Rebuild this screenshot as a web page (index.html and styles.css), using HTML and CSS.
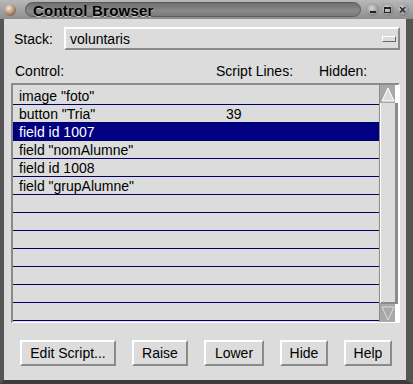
FILE: index.html
```html
<!DOCTYPE html>
<html lang="en">
<head>
    <meta charset="UTF-8">
    <title>Control Browser</title>
    <link rel="stylesheet" href="styles.css">
</head>
<body>
    <div class="window">
        <!-- Title bar -->
        <div class="titlebar">
            <span class="orb"></span>
            <div class="title-pill"><span class="title-text">Control Browser</span></div>
            <div class="win-btns">
                <span class="win-btn"><span class="glyph-min"></span></span>
                <span class="win-btn"><span class="glyph-max"></span></span>
                <span class="win-btn"><span class="glyph-close">&times;</span></span>
            </div>
        </div>

        <div class="content">
            <div class="stack-row">
                <span class="stack-label">Stack:</span>
                <div class="dropdown">
                    <span>voluntaris</span>
                    <span class="drop-ind"></span>
                </div>
            </div>

            <div class="headers">
                <span class="col-control">Control:</span>
                <span class="col-lines">Script Lines:</span>
                <span class="col-hidden">Hidden:</span>
            </div>

            <div class="listbox">
                <div class="rows">
                    <div class="row"><span class="c1">image "foto"</span></div>
                    <div class="row"><span class="c1">button "Tria"</span><span class="c2">39</span></div>
                    <div class="row selected"><span class="c1">field id 1007</span></div>
                    <div class="row"><span class="c1">field "nomAlumne"</span></div>
                    <div class="row"><span class="c1">field id 1008</span></div>
                    <div class="row"><span class="c1">field "grupAlumne"</span></div>
                    <div class="row"></div>
                    <div class="row"></div>
                    <div class="row"></div>
                    <div class="row"></div>
                    <div class="row"></div>
                    <div class="row"></div>
                    <div class="row"></div>
                </div>
                <div class="scrollbar">
                    <div class="arrow">
                        <svg width="14" height="15" viewBox="0 0 14 15"><path d="M7 1 L13 14 L1 14 Z" fill="#dcdcdc" stroke="#ffffff" stroke-width="1"/></svg>
                    </div>
                    <div class="thumb"></div>
                    <div class="arrow">
                        <svg width="14" height="15" viewBox="0 0 14 15"><path d="M1 1 L13 1 L7 14 Z" fill="#a8a8a8" stroke="#dcdcdc" stroke-width="1"/></svg>
                    </div>
                </div>
            </div>

            <div class="buttons">
                <button class="btn btn-edit">Edit Script...</button>
                <button class="btn btn-raise">Raise</button>
                <button class="btn btn-lower">Lower</button>
                <button class="btn btn-hide">Hide</button>
                <button class="btn btn-help">Help</button>
            </div>
        </div>
    </div>
</body>
</html>
```

FILE: styles.css
```css
* {
    margin: 0;
    padding: 0;
    box-sizing: border-box;
}

body {
    width: 413px;
    height: 384px;
    overflow: hidden;
    background: #4a4a4a;
    font-family: 'Liberation Sans', Arial, sans-serif;
    font-size: 14px;
    color: #000;
}

/* Outer frame */
.window {
    width: 413px;
    height: 384px;
    display: flex;
    flex-direction: column;
    background: #a4a4a4;
    border-left: 4px solid #555;
    border-right: 7px solid #555;
    border-bottom: 4px solid #3c3c3c;
}

/* Title bar */
.titlebar {
    height: 19px;
    display: flex;
    align-items: center;
    background: linear-gradient(#b8b8b8, #8e8e8e);
    margin: 0 -7px 0 -4px;
    padding: 0 4px 0 4px;
}

.orb {
    width: 12px;
    height: 12px;
    border-radius: 50%;
    background: radial-gradient(circle at 40% 35%, #f4e8d8 0, #b89a80 45%, #4a3a30 100%);
    flex-shrink: 0;
}

.title-pill {
    margin-left: 9px;
    width: 338px;
    height: 15px;
    border-radius: 8px;
    background: linear-gradient(#6e6e6e, #8a8a8a 60%, #7a7a7a);
    border: 1px solid #5a5a5a;
    display: flex;
    align-items: center;
    padding-left: 7px;
}

.title-text {
    font-weight: bold;
    font-size: 15px;
    letter-spacing: 0.2px;
    line-height: 15px;
    margin-top: 2px;
    text-shadow: 0 1px 0 #c8c8c8;
}

.win-btns {
    display: flex;
    gap: 2px;
    margin-left: 5px;
}

.win-btn {
    width: 13px;
    height: 13px;
    border-radius: 50%;
    background: radial-gradient(circle at 45% 40%, #d8d8d8 0, #9a9a9a 55%, #5a5a5a 100%);
    display: flex;
    align-items: center;
    justify-content: center;
}

.glyph-min {
    width: 6px;
    height: 2px;
    background: #222;
    margin-top: 5px;
}

.glyph-max {
    width: 7px;
    height: 6px;
    border: 1px solid #222;
    border-top-width: 2px;
}

.glyph-close {
    font-size: 12px;
    font-weight: bold;
    line-height: 12px;
    color: #222;
}

/* Dialog body */
.content {
    flex: 1;
    background: #dcdcdc;
    padding: 8px 6px 0 7px;
    display: flex;
    flex-direction: column;
}

.stack-row {
    display: flex;
    align-items: center;
    height: 23px;
}

.stack-label {
    width: 53px;
    padding-left: 3px;
}

.dropdown {
    width: 336px;
    height: 23px;
    border-top: 2px solid #fff;
    border-left: 2px solid #fff;
    border-bottom: 2px solid #8a8a8a;
    border-right: 2px solid #8a8a8a;
    display: flex;
    align-items: center;
    justify-content: space-between;
    padding: 0 2px 0 4px;
}

.drop-ind {
    width: 14px;
    height: 6px;
    border-top: 1px solid #fff;
    border-left: 1px solid #fff;
    border-bottom: 1px solid #6a6a6a;
    border-right: 1px solid #6a6a6a;
}

.headers {
    display: flex;
    height: 16px;
    margin-top: 13px;
    padding-left: 4px;
}

.col-control { width: 201px; }
.col-lines { width: 103px; }

/* List */
.listbox {
    margin-top: 4px;
    width: 389px;
    height: 240px;
    border-top: 2px solid #8a8a8a;
    border-left: 2px solid #8a8a8a;
    border-bottom: 1px solid #fff;
    border-right: 2px solid #fff;
    display: flex;
}

.rows {
    width: 366px;
    padding-top: 2px;
}

.row {
    height: 18px;
    border-bottom: 1px solid #000066;
    display: flex;
    align-items: center;
    padding-left: 6px;
    line-height: 16px;
}

.row .c1 { width: 207px; }

.row.selected {
    background: #000080;
    color: #fff;
}

.scrollbar {
    width: 19px;
    border-left: 1px solid #8a8a8a;
    display: flex;
    flex-direction: column;
}

.arrow {
    height: 18px;
    background: #a8a8a8;
    display: flex;
    align-items: center;
    justify-content: center;
    border-right: 3px solid #fff;
}

.thumb {
    flex: 1;
    background: #dcdcdc;
    border-left: 1px solid #fff;
    border-right: 3px solid #8a8a8a;
    border-bottom: 2px solid #8a8a8a;
}

/* Buttons */
.buttons {
    display: flex;
    margin-top: 17px;
    padding-left: 9px;
}

.btn {
    font-family: 'Liberation Sans', Arial, sans-serif;
    font-size: 14px;
    height: 26px;
    background: #dcdcdc;
    border-top: 2px solid #fff;
    border-left: 2px solid #fff;
    border-bottom: 2px solid #8a8a8a;
    border-right: 2px solid #8a8a8a;
    color: #000;
}

.btn-edit { width: 96px; }
.btn-raise { width: 56px; margin-left: 16px; }
.btn-lower { width: 60px; margin-left: 16px; }
.btn-hide { width: 48px; margin-left: 16px; }
.btn-help { width: 48px; margin-left: 16px; }
```
